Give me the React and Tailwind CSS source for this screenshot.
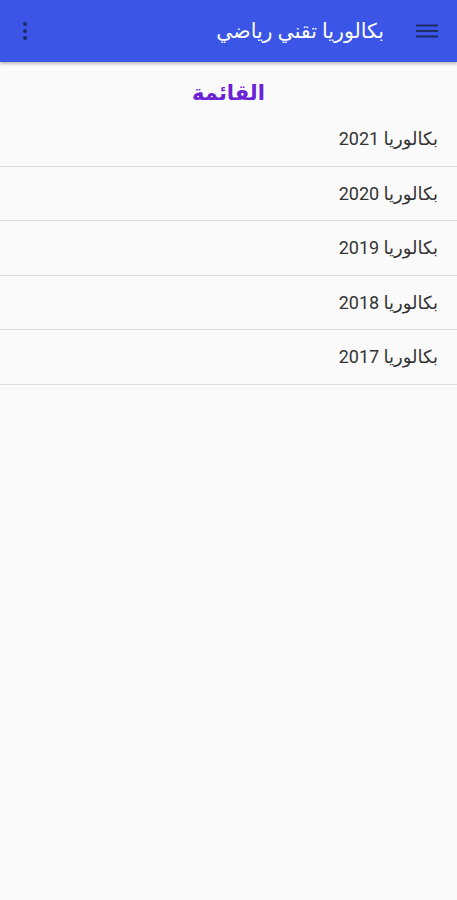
import React from 'react';

const years = ['2021', '2020', '2019', '2018', '2017'];

export default function App() {
  return (
    <div dir="rtl" className="min-h-[900px] w-[457px] bg-[#fafafa]" style={{ fontFamily: 'Roboto, "Noto Sans", "DejaVu Sans", sans-serif' }}>
      <header className="h-[62px] bg-[#3b56e6] flex items-center pr-[17px] pl-[18px] shadow-[0_2px_3px_rgba(0,0,0,0.25)]">
        <svg width="26" height="24" viewBox="0 0 26 24" className="text-[#1f2b66]">
          <path d="M2 6.5h22M2 12h22M2 17.5h22" stroke="currentColor" strokeWidth="2" />
        </svg>
        <h1 className="mr-[30px] text-white text-[20.5px] font-medium">بكالوريا تقني رياضي</h1>
        <div className="flex-1" />
        <svg width="14" height="24" viewBox="0 0 14 24" className="text-[#1f2b66]">
          <circle cx="7" cy="5" r="2" fill="currentColor" />
          <circle cx="7" cy="12" r="2" fill="currentColor" />
          <circle cx="7" cy="19" r="2" fill="currentColor" />
        </svg>
      </header>
      <div className="h-[50px] flex items-center justify-center pt-[14px]">
        <h2 className="text-[21px] font-bold text-[#6b22d6]">القائمة</h2>
      </div>
      <ul>
        {years.map(y => (
          <li key={y} className="h-[54.5px] flex items-center pr-[19px] border-b border-[#dddddd] text-[18px] text-[#333333]">
            بكالوريا {y}
          </li>
        ))}
      </ul>
    </div>
  );
}
